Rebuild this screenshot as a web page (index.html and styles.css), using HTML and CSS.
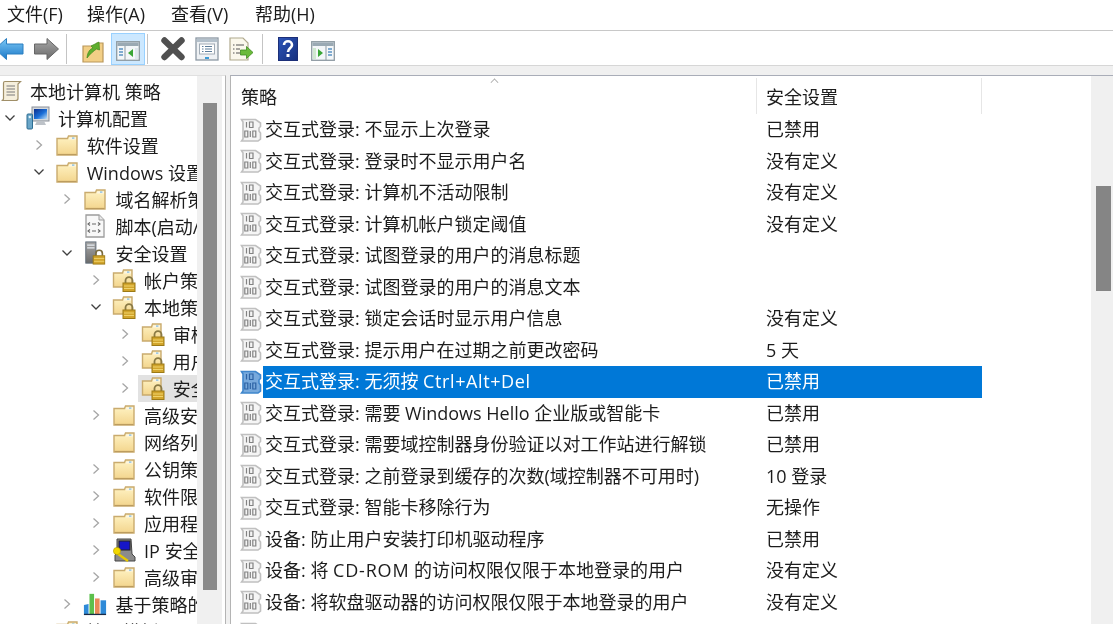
FILE: index.html
```html
<!DOCTYPE html>
<html lang="zh-CN">
<head>
<meta charset="utf-8">
<title>本地安全策略</title>
<link rel="stylesheet" href="styles.css">
</head>
<body>
<svg class="defs" aria-hidden="true">
  <defs>
    <linearGradient id="gFolder" x1="0" y1="0" x2="0" y2="1"><stop offset="0" stop-color="#fff3c4"/><stop offset="1" stop-color="#f3d58d"/></linearGradient>
    <linearGradient id="gBlue" x1="0" y1="0" x2="0" y2="1"><stop offset="0" stop-color="#7cc8f5"/><stop offset="1" stop-color="#1b78c8"/></linearGradient>
    <linearGradient id="gGray" x1="0" y1="0" x2="0" y2="1"><stop offset="0" stop-color="#a8a8a8"/><stop offset="1" stop-color="#6a6a6a"/></linearGradient>
    <linearGradient id="gHelp" x1="0" y1="0" x2="1" y2="1"><stop offset="0" stop-color="#2d55b8"/><stop offset="1" stop-color="#16307e"/></linearGradient>
    <linearGradient id="gScreen" x1="0" y1="0" x2="1" y2="1"><stop offset="0" stop-color="#0c2e8c"/><stop offset=".55" stop-color="#1a6fd8"/><stop offset="1" stop-color="#bfe0f6"/></linearGradient>
    <symbol id="folder" viewBox="0 0 24 22">
      <path d="M2 4.5H12.5L13.5 2H22V21H2Z" fill="url(#gFolder)" stroke="#c9ab6e" stroke-width="1.4"/>
      <path d="M14.5 3.4H21V5.6H14Z" fill="#fbf6e6"/><rect x="17" y="3.4" width="2.4" height="1.4" fill="#8cc0e4"/>
      <path d="M2.7 20.4H21.3" stroke="#b99a5c" stroke-width="1"/>
    </symbol>
    <symbol id="lock" viewBox="0 0 24 24">
      <path d="M1.5 5H10.5L11.5 2H20V19H1.5Z" fill="url(#gFolder)" stroke="#c9ab6e" stroke-width="1.4"/>
      <path d="M12.5 3.4H19V5.6H12Z" fill="#fbf6e6"/><rect x="15" y="3.4" width="2.4" height="1.4" fill="#8cc0e4"/>
      <path d="M13.5 15V12.6A3.5 3.5 0 0 1 20.5 12.6V15" fill="none" stroke="#8a7a45" stroke-width="1.8"/>
      <rect x="11" y="15" width="12" height="8.5" fill="#d2a52c" stroke="#9c7a16"/>
      <path d="M12 18H22M12 20.5H22" stroke="#f0d36b"/>
    </symbol>
    <symbol id="policy" viewBox="0 0 22 24">
      <path d="M1.5 1.5H15.5L20.5 5V8.5L19 10V13L20.5 15V21L18 23H1.5L3 21V4Z" fill="#f5f5f5" stroke="#c0c0c0" stroke-width="1.6"/>
      <path d="M6.5 4V9.5M9.5 4H13V9.5H9.5ZM4.8 13H7.8V19H4.8ZM10.3 13V19M12.8 13H15.8V19H12.8Z" fill="none" stroke="#828282" stroke-width="1.2"/>
    </symbol>
    <symbol id="policy-sel" viewBox="0 0 22 24">
      <path d="M1.5 1.5H15.5L20.5 5V8.5L19 10V13L20.5 15V21L18 23H1.5L3 21V4Z" fill="#77a9dc" stroke="#3f86cc" stroke-width="1.6"/>
      <path d="M6.5 4V9.5M9.5 4H13V9.5H9.5ZM4.8 13H7.8V19H4.8ZM10.3 13V19M12.8 13H15.8V19H12.8Z" fill="none" stroke="#2c62a4" stroke-width="1.2"/>
    </symbol>
    <symbol id="scroll" viewBox="0 0 22 22">
      <path d="M5 1.5H20.5L18 4V18.5C18 20 17 20.5 15.5 20.5H1.5C3 20.5 3.5 19.5 3.5 18.5V3C3.5 2 4 1.5 5 1.5Z" fill="#f6efdc" stroke="#a08f68" stroke-width="1.2"/>
      <path d="M6.5 6H15M6.5 9H15M6.5 12H15M6.5 15H15" stroke="#7a7a7a" stroke-width="1.1"/>
    </symbol>
    <symbol id="computer" viewBox="0 0 24 24">
      <rect x="6" y="1" width="17" height="14" fill="#d4d8dc" stroke="#8a9099"/>
      <rect x="8" y="3" width="13" height="10" fill="url(#gScreen)"/>
      <path d="M11 15H18L20 19H9Z" fill="#bdc2c8"/>
      <rect x="1" y="8" width="5.5" height="15" rx="1" fill="#6aa6c8" stroke="#2d6d92"/>
      <circle cx="3.8" cy="11" r="1.2" fill="#dff2fb"/>
    </symbol>
    <symbol id="script" viewBox="0 0 22 24">
      <path d="M2 1H15L20 6V23H2Z" fill="#f8f8f8" stroke="#9c9c9c" stroke-width="1.3"/>
      <path d="M15 1V6H20" fill="#e8e8e8" stroke="#9c9c9c"/>
      <path d="M6 8.5L4 10L6 11.5M8 10H12M14 8.5L16 10L14 11.5M6 15.5L4 17L6 18.5M8 17H12M14 15.5L16 17L14 18.5" fill="none" stroke="#666" stroke-width="1.1"/>
    </symbol>
    <symbol id="security" viewBox="0 0 22 26">
      <rect x="1" y="1" width="11" height="23" fill="url(#gGray)" stroke="#5f6b78"/>
      <path d="M2.5 4.5H10.5M2.5 7.5H10.5" stroke="#e6ecf2" stroke-width="1.4"/>
      <path d="M12 16V13.5A3.5 3.5 0 0 1 19 13.5V16" fill="none" stroke="#7b6c3e" stroke-width="1.8"/>
      <rect x="9" y="16" width="12.5" height="9" fill="#d2a52c" stroke="#9c7a16"/>
      <path d="M10 19H21M10 22H21" stroke="#f0d36b"/>
    </symbol>
    <symbol id="ipsec" viewBox="0 0 24 24">
      <path d="M5 1H19L20 16L23 19V23H3V17L5 15Z" fill="#8b8b8b" stroke="#444" stroke-width="1"/>
      <rect x="7" y="3" width="11" height="9" fill="#1616c8" stroke="#222"/>
      <path d="M4 14.5L16 23" stroke="#e8c900" stroke-width="2.2"/>
      <circle cx="5" cy="13" r="3.6" fill="#f2d800" stroke="#b29a00" stroke-width=".6"/>
    </symbol>
    <symbol id="chart" viewBox="0 0 26 24">
      <path d="M1 23V13L6 12V23Z" fill="#2e8ad8"/>
      <rect x="7" y="1" width="5" height="22" fill="#5cc04c"/>
      <rect x="13" y="6" width="5" height="17" fill="#e88a58"/>
      <rect x="19" y="8" width="6" height="15" fill="#2e8ad8"/>
      <path d="M1 23.3H25" stroke="#1a2a44" stroke-width="1.4"/>
    </symbol>
    <symbol id="open" viewBox="0 0 12 8"><path d="M1.5 1.5L6 6L10.5 1.5" fill="none" stroke="#404040" stroke-width="1.3"/></symbol>
    <symbol id="closed" viewBox="0 0 8 12"><path d="M1.5 1.5L6.5 6L1.5 10.5" fill="none" stroke="#a6a6a6" stroke-width="1.3"/></symbol>
    <symbol id="back" viewBox="0 0 34 24"><path d="M1 12L12.5 1.5V7H29V17H12.5V22.5Z" fill="url(#gBlue)" stroke="#2b7ec0" stroke-width="1"/></symbol>
    <symbol id="forward" viewBox="0 0 34 24"><path d="M29.5 12L18 1.5V7H5.5V17H18V22.5Z" fill="url(#gGray)" stroke="#666" stroke-width="1"/></symbol>
    <symbol id="up" viewBox="0 0 24 24">
      <path d="M2 7H16V4H22V23H2Z" fill="#f2cf86" stroke="#b9975a" stroke-width="1.2"/>
      <path d="M6 19C6.5 13 9 10 12 9L10 7L18 3L18.5 11L15.5 10C12.5 12 9 15 6 19Z" fill="#5fae2e" stroke="#3f8a1c" stroke-width=".7"/>
    </symbol>
    <symbol id="pane-l" viewBox="0 0 24 20">
      <rect x=".7" y=".7" width="22.6" height="18.6" fill="#f4f7f9" stroke="#8f9ba3" stroke-width="1.3"/>
      <rect x="1.4" y="1.4" width="21.2" height="3.6" fill="#9aa9b3"/>
      <path d="M9 5V19" stroke="#8f9ba3"/>
      <path d="M3 8H7M3 11H7M3 14H7" stroke="#5a93c2" stroke-width="1.4"/>
      <path d="M17 8V16L12 12Z" fill="#3aa635"/>
      <path d="M19 7H22V18H19Z" fill="#dfe8ee"/>
    </symbol>
    <symbol id="pane-r" viewBox="0 0 24 20">
      <rect x=".7" y=".7" width="22.6" height="18.6" fill="#f4f7f9" stroke="#8f9ba3" stroke-width="1.3"/>
      <rect x="1.4" y="1.4" width="21.2" height="3.6" fill="#9aa9b3"/>
      <path d="M15 5V19" stroke="#8f9ba3"/>
      <path d="M17 8H21M17 11H21M17 14H21" stroke="#5a93c2" stroke-width="1.4"/>
      <path d="M7 8V16L12 12Z" fill="#3aa635"/>
      <path d="M2 7H5V18H2Z" fill="#cfe8cf"/>
    </symbol>
    <symbol id="del" viewBox="0 0 24 24"><path d="M3.5 3.5L20.5 20M20.5 3.5L3.5 20" stroke="#505050" stroke-width="6.4" stroke-linecap="round"/></symbol>
    <symbol id="props" viewBox="0 0 24 24">
      <rect x="1" y="1" width="22" height="22" fill="#eef1f4" stroke="#8c98a4" stroke-width="1.3"/>
      <rect x="2" y="2" width="20" height="3" fill="#b3c0cb"/>
      <rect x="4.5" y="7" width="15" height="10" fill="#fff" stroke="#a2acb6"/>
      <path d="M7 9.5H8.5M10 9.5H17M7 12H8.5M10 12H17M7 14.5H8.5M10 14.5H17" stroke="#5d7c99"/>
      <rect x="10" y="20" width="4" height="2" fill="#3d9bd6"/>
    </symbol>
    <symbol id="export" viewBox="0 0 26 24">
      <path d="M2 1H15L20 6V23H2Z" fill="#fbf8ec" stroke="#b0a98e" stroke-width="1.2"/>
      <path d="M5 8H6.5M8 8H16M5 12H6.5M8 12H12M5 16H6.5M8 16H12" stroke="#555"/>
      <path d="M25 15.5L18.5 9.5V13H12.5V18H18.5V21.5Z" fill="#6bbb3a" stroke="#3e8a1e" stroke-width=".8"/>
    </symbol>
    <symbol id="help" viewBox="0 0 20 24">
      <rect x=".5" y=".5" width="19" height="23" fill="url(#gHelp)" stroke="#1c2f78"/>
      <path d="M6 8C6 3 14 3 14 8C14 11 10 11 10 15" fill="none" stroke="#fff" stroke-width="2.6"/>
      <rect x="8.5" y="17" width="3" height="3" fill="#fff"/>
    </symbol>
  </defs>
</svg>

<div class="app">
  <nav class="menubar">
    <span class="menu-item">文件(F)</span>
    <span class="menu-item">操作(A)</span>
    <span class="menu-item">查看(V)</span>
    <span class="menu-item">帮助(H)</span>
  </nav>

  <div class="toolbar">
    <span class="tb-btn tb-first"><svg class="tb-wide"><use href="#back"/></svg></span>
    <span class="tb-btn"><svg class="tb-wide"><use href="#forward"/></svg></span>
    <span class="tb-sep"></span>
    <span class="tb-btn"><svg class="tb-ic tb-low"><use href="#up"/></svg></span>
    <span class="tb-btn tb-active"><svg class="tb-pane"><use href="#pane-l"/></svg></span>
    <span class="tb-sep tb-sep-tight"></span>
    <span class="tb-btn"><svg class="tb-ic"><use href="#del"/></svg></span>
    <span class="tb-btn tb-tuck"><svg class="tb-ic"><use href="#props"/></svg></span>
    <span class="tb-btn tb-tuck"><svg class="tb-ic tb-wider"><use href="#export"/></svg></span>
    <span class="tb-sep tb-sep-last"></span>
    <span class="tb-btn"><svg class="tb-ic"><use href="#help"/></svg></span>
    <span class="tb-btn"><svg class="tb-pane"><use href="#pane-r"/></svg></span>
  </div>

  <main class="panes">
    <aside class="tree-pane">
      <ul class="tree">
        <li class="node node-root"><svg class="ic-root"><use href="#scroll"/></svg><span>本地计算机 策略</span></li>
        <li class="node"><svg class="chev-open"><use href="#open"/></svg><span class="ic-slot"><svg class="ic"><use href="#computer"/></svg></span><span>计算机配置</span></li>
        <li class="node l1"><svg class="chev-closed"><use href="#closed"/></svg><span class="ic-slot"><svg class="ic"><use href="#folder"/></svg></span><span>软件设置</span></li>
        <li class="node l1"><svg class="chev-open"><use href="#open"/></svg><span class="ic-slot"><svg class="ic"><use href="#folder"/></svg></span><span>Windows 设置</span></li>
        <li class="node l2"><svg class="chev-closed"><use href="#closed"/></svg><span class="ic-slot"><svg class="ic"><use href="#folder"/></svg></span><span>域名解析策略</span></li>
        <li class="node l2"><span class="chev-none"></span><span class="ic-slot"><svg class="ic"><use href="#script"/></svg></span><span>脚本(启动/关机)</span></li>
        <li class="node l2"><svg class="chev-open"><use href="#open"/></svg><span class="ic-slot"><svg class="ic"><use href="#security"/></svg></span><span>安全设置</span></li>
        <li class="node l3"><svg class="chev-closed"><use href="#closed"/></svg><span class="ic-slot"><svg class="ic"><use href="#lock"/></svg></span><span>帐户策略</span></li>
        <li class="node l3"><svg class="chev-open"><use href="#open"/></svg><span class="ic-slot"><svg class="ic"><use href="#lock"/></svg></span><span>本地策略</span></li>
        <li class="node l4"><svg class="chev-closed"><use href="#closed"/></svg><span class="ic-slot"><svg class="ic"><use href="#lock"/></svg></span><span>审核策略</span></li>
        <li class="node l4"><svg class="chev-closed"><use href="#closed"/></svg><span class="ic-slot"><svg class="ic"><use href="#lock"/></svg></span><span>用户权限分配</span></li>
        <li class="node l4 node-sel"><svg class="chev-closed"><use href="#closed"/></svg><span class="sel-box"><span class="ic-slot"><svg class="ic"><use href="#lock"/></svg></span><span>安全选项</span></span></li>
        <li class="node l3"><svg class="chev-closed"><use href="#closed"/></svg><span class="ic-slot"><svg class="ic"><use href="#folder"/></svg></span><span>高级安全</span></li>
        <li class="node l3"><span class="chev-none"></span><span class="ic-slot"><svg class="ic"><use href="#folder"/></svg></span><span>网络列表</span></li>
        <li class="node l3"><svg class="chev-closed"><use href="#closed"/></svg><span class="ic-slot"><svg class="ic"><use href="#folder"/></svg></span><span>公钥策略</span></li>
        <li class="node l3"><svg class="chev-closed"><use href="#closed"/></svg><span class="ic-slot"><svg class="ic"><use href="#folder"/></svg></span><span>软件限制</span></li>
        <li class="node l3"><svg class="chev-closed"><use href="#closed"/></svg><span class="ic-slot"><svg class="ic"><use href="#folder"/></svg></span><span>应用程序</span></li>
        <li class="node l3"><svg class="chev-closed"><use href="#closed"/></svg><span class="ic-slot"><svg class="ic"><use href="#ipsec"/></svg></span><span>IP 安全策略</span></li>
        <li class="node l3"><svg class="chev-closed"><use href="#closed"/></svg><span class="ic-slot"><svg class="ic"><use href="#folder"/></svg></span><span>高级审核</span></li>
        <li class="node l2"><svg class="chev-closed"><use href="#closed"/></svg><span class="ic-slot"><svg class="ic"><use href="#chart"/></svg></span><span>基于策略的</span></li>
        <li class="node l1"><span class="chev-none"></span><span class="ic-slot"><svg class="ic"><use href="#folder"/></svg></span><span>管理模板</span></li>
      </ul>
      <div class="scroll scroll-left"><div class="thumb thumb-left"></div></div>
    </aside>

    <section class="list-pane">
      <div class="list">
        <div class="list-head">
          <span class="sort-mark"></span>
          <span class="head-name">策略</span>
          <span class="head-value">安全设置</span>
        </div>
        <div class="row"><svg class="ic-policy"><use href="#policy"/></svg><div class="cells"><span class="name">交互式登录: 不显示上次登录</span><span class="value">已禁用</span></div></div>
        <div class="row"><svg class="ic-policy"><use href="#policy"/></svg><div class="cells"><span class="name">交互式登录: 登录时不显示用户名</span><span class="value">没有定义</span></div></div>
        <div class="row"><svg class="ic-policy"><use href="#policy"/></svg><div class="cells"><span class="name">交互式登录: 计算机不活动限制</span><span class="value">没有定义</span></div></div>
        <div class="row"><svg class="ic-policy"><use href="#policy"/></svg><div class="cells"><span class="name">交互式登录: 计算机帐户锁定阈值</span><span class="value">没有定义</span></div></div>
        <div class="row"><svg class="ic-policy"><use href="#policy"/></svg><div class="cells"><span class="name">交互式登录: 试图登录的用户的消息标题</span><span class="value"></span></div></div>
        <div class="row"><svg class="ic-policy"><use href="#policy"/></svg><div class="cells"><span class="name">交互式登录: 试图登录的用户的消息文本</span><span class="value"></span></div></div>
        <div class="row"><svg class="ic-policy"><use href="#policy"/></svg><div class="cells"><span class="name">交互式登录: 锁定会话时显示用户信息</span><span class="value">没有定义</span></div></div>
        <div class="row"><svg class="ic-policy"><use href="#policy"/></svg><div class="cells"><span class="name">交互式登录: 提示用户在过期之前更改密码</span><span class="value">5 天</span></div></div>
        <div class="row row-sel"><svg class="ic-policy"><use href="#policy-sel"/></svg><div class="cells"><span class="name">交互式登录: 无须按 <span class="wide-a">Ctrl+Alt+Del</span></span><span class="value">已禁用</span></div></div>
        <div class="row"><svg class="ic-policy"><use href="#policy"/></svg><div class="cells"><span class="name">交互式登录: 需要 Windows Hello 企业版或智能卡</span><span class="value">已禁用</span></div></div>
        <div class="row"><svg class="ic-policy"><use href="#policy"/></svg><div class="cells"><span class="name">交互式登录: 需要域控制器身份验证以对工作站进行解锁</span><span class="value">已禁用</span></div></div>
        <div class="row"><svg class="ic-policy"><use href="#policy"/></svg><div class="cells"><span class="name">交互式登录: 之前登录到缓存的次数(域控制器不可用时)</span><span class="value">10 登录</span></div></div>
        <div class="row"><svg class="ic-policy"><use href="#policy"/></svg><div class="cells"><span class="name">交互式登录: 智能卡移除行为</span><span class="value">无操作</span></div></div>
        <div class="row"><svg class="ic-policy"><use href="#policy"/></svg><div class="cells"><span class="name">设备: 防止用户安装打印机驱动程序</span><span class="value">已禁用</span></div></div>
        <div class="row"><svg class="ic-policy"><use href="#policy"/></svg><div class="cells"><span class="name">设备: 将 <span class="wide-b">CD-ROM</span> 的访问权限仅限于本地登录的用户</span><span class="value">没有定义</span></div></div>
        <div class="row"><svg class="ic-policy"><use href="#policy"/></svg><div class="cells"><span class="name">设备: 将软盘驱动器的访问权限仅限于本地登录的用户</span><span class="value">没有定义</span></div></div>
        <div class="row"><svg class="ic-policy"><use href="#policy"/></svg><div class="cells"><span class="name"></span><span class="value"></span></div></div>
      </div>
      <div class="scroll scroll-right"><div class="thumb thumb-right"></div></div>
    </section>
  </main>
</div>
</body>
</html>
```

FILE: styles.css
```css
* { box-sizing: border-box; }
html, body { margin: 0; padding: 0; height: 100%; overflow: hidden; background: #f0f0f0; }
body {
  font-family: "Open Sans", "Noto Sans CJK SC", sans-serif;
  font-size: 18px;
  color: #1c1c1c;
}
.defs { position: absolute; width: 0; height: 0; }
.app { display: flex; flex-direction: column; width: 1113px; height: 624px; overflow: hidden; filter: blur(.35px); }

.menubar {
  display: grid; grid-template-columns: 80px 84px 84px 84px; height: 31px; padding: 0 0 3px 7px; align-items: center;
  background: #fff; border-bottom: 1px solid #c8c8c8; flex: none;
}
.menu-item { line-height: 22px; white-space: nowrap; }

.toolbar {
  display: flex; align-items: center; gap: 1px; height: 35px; flex: none;
  padding-top: 1px; background: #fff; border-bottom: 1px solid #d6d6d6;
}
.tb-btn { display: flex; width: 34px; height: 32px; align-items: center; justify-content: center; flex: none; }
.tb-first { margin-left: -6px; }
.tb-tuck { margin-left: -1px; }
.tb-active { background: #cce8ff; border: 1px solid #99d1ff; }
.tb-sep { width: 1px; height: 30px; background: #c4c4c4; margin: 0 8px 0 2px; flex: none; }
.tb-sep-tight { margin: 0 7px 0 1px; }
.tb-sep-last { margin: 0 7px 0 3px; }
.tb-wide { width: 34px; height: 24px; }
.tb-ic { width: 24px; height: 24px; }
.tb-wider { width: 26px; }
.tb-low { margin-top: 4px; }
.tb-pane { width: 24px; height: 20px; margin-top: 4px; }

.panes { display: flex; flex: 1; min-height: 0; padding-top: 9px; gap: 4px; background: #f0f0f0; }

.tree-pane {
  display: flex; width: 226px; flex: none; background: #fff;
  border-right: 1px solid #b4b4b4; border-top: 1px solid #e0e0e0; overflow: hidden;
}
.tree { list-style: none; margin: 0; padding: 1.5px 0 0; width: 197px; flex: none; overflow: hidden; }
.node { display: flex; align-items: center; height: 27px; white-space: nowrap; }
.node-root { padding-left: 0; }
.ic-root { width: 22px; height: 22px; margin-right: 8px; flex: none; }
.l1 { padding-left: 28.7px; }
.l2 { padding-left: 57.4px; }
.l3 { padding-left: 86.1px; }
.l4 { padding-left: 114.8px; }
.chev-open { width: 12px; height: 8px; margin: 0 10px 0 4px; flex: none; }
.chev-closed { width: 8px; height: 12px; margin: 0 12px 0 6px; flex: none; }
.chev-none { width: 26px; flex: none; }
.ic-slot { display: flex; width: 32px; flex: none; }
.ic { width: 24px; height: 24px; }
.sel-box { display: flex; align-items: center; height: 27px; margin-left: -3px; padding-left: 3px; background: #e2e2e2; flex: none; }

.scroll { flex: none; background: #f0f0f0; position: relative; }
.scroll-left { width: 25px; padding: 27px 5px 0 6px; }
.thumb-left { height: 487px; background: #8a8a8a; }

.list-pane {
  display: flex; flex: 1; min-width: 0; background: #fff;
  border-left: 1px solid #b4b4b4; border-top: 1px solid #a9adb8;
}
.list { width: 860px; flex: none; overflow: hidden; }
.list-head { position: relative; display: flex; height: 38px; align-items: flex-start; padding-top: 2px; }
.head-name { width: 526px; padding-left: 10px; height: 36px; line-height: 38px; border-right: 1px solid #e6e6e6; flex: none; }
.head-value { width: 225px; padding-left: 9px; height: 36px; line-height: 38px; border-right: 1px solid #e6e6e6; flex: none; }
.sort-mark {
  position: absolute; left: 260px; top: 3px; width: 7px; height: 7px;
  border-left: 1px solid #a0a0a0; border-top: 1px solid #a0a0a0; transform: rotate(45deg) scale(.8);
}

.row { display: flex; align-items: center; height: 31.5px; padding-left: 9px; }
.ic-policy { width: 22px; height: 24px; margin-right: 1px; flex: none; }
.cells { display: flex; width: 719px; height: 100%; padding-bottom: 3px; align-items: center; white-space: nowrap; flex: none; }
.name { width: 503px; padding-left: 2px; flex: none; }
.value { padding-left: 0; }
.wide-a { letter-spacing: .6px; }
.wide-b { letter-spacing: .8px; }
.row-sel .cells { background: #0078d7; color: #fff; }

.scroll-right { width: 22px; padding: 110px 2px 0 5px; }
.thumb-right { height: 105px; background: #858585; }
```
